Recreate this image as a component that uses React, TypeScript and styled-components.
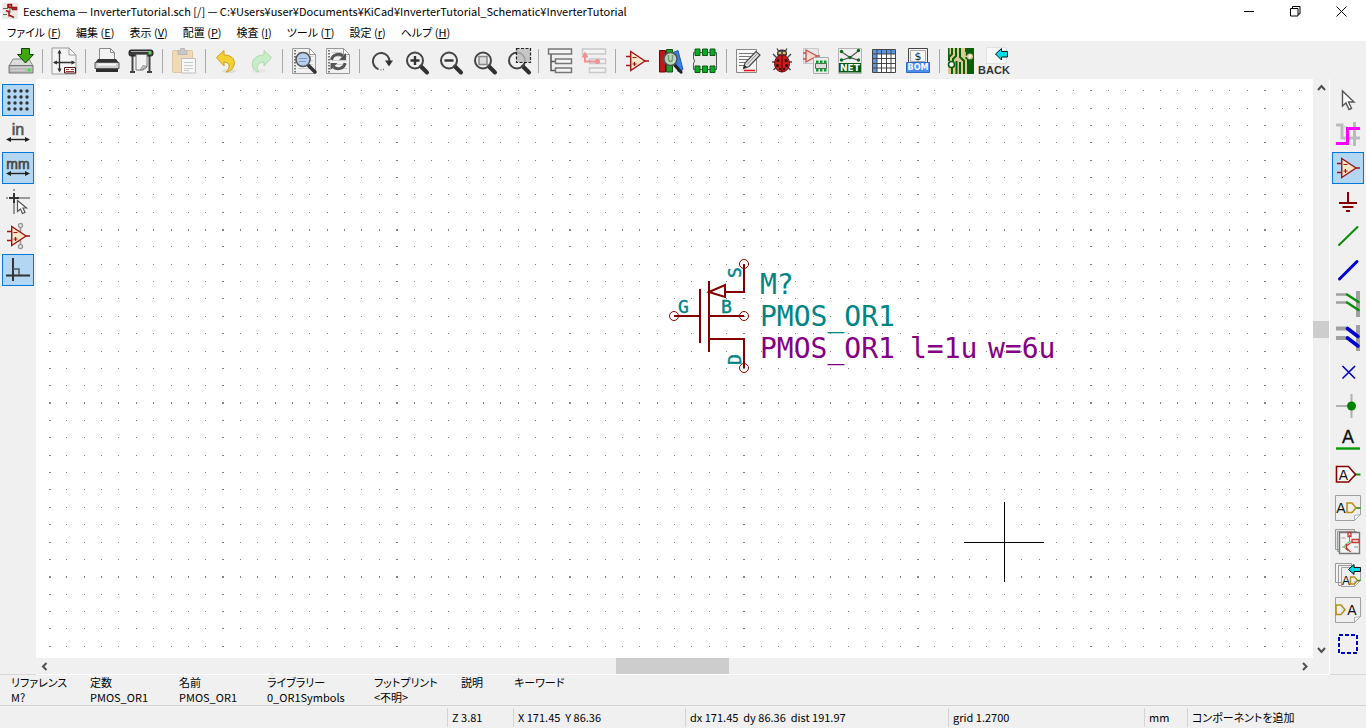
import React from "react";
import styled, { createGlobalStyle } from "styled-components";

const GlobalStyle = createGlobalStyle`
  * { box-sizing: border-box; }
  html, body { margin: 0; padding: 0; height: 100%; }
  body {
    font-family: "Noto Sans CJK JP", "Noto Sans", sans-serif;
    font-feature-settings: "palt";
    font-size: 11px;
    line-height: 16px;
    color: #000;
    background: #f0f0f0;
  }
  #root { height: 100%; }
  button { font: inherit; color: inherit; }
`;

const Window = styled.div`
  display: flex;
  flex-direction: column;
  min-height: 100vh;
  overflow: hidden;
`;

const TitleBar = styled.header`
  display: flex;
  align-items: center;
  height: 22px;
  padding: 0 2px;
  background: #fff;
`;

const AppIcon = styled.svg`
  width: 16px;
  height: 16px;
  flex: none;
`;

const Title = styled.h1`
  flex: 1;
  margin: 0 0 0 5px;
  font-size: 11px;
  font-weight: 400;
  line-height: 22px;
  white-space: nowrap;
`;

const CaptionButton = styled.button`
  display: flex;
  align-items: center;
  justify-content: center;
  width: 46px;
  height: 22px;
  padding: 0;
  border: 0;
  background: transparent;
`;

const MenuBar = styled.nav`
  display: flex;
  height: 19px;
  padding-left: 7px;
  gap: 15px;
  background: #fff;
`;

const MenuButton = styled.button`
  padding: 0;
  border: 0;
  background: transparent;
  line-height: 20px;
  white-space: nowrap;
`;

const ToolBar = styled.div`
  display: flex;
  align-items: center;
  height: 38px;
  padding: 2px 0 0 4px;
  background: #f0f0f0;
`;

const ToolButton = styled.button`
  display: flex;
  align-items: center;
  justify-content: center;
  width: 34px;
  height: 34px;
  padding: 0;
  border: 0;
  background: transparent;
`;

const Separator = styled.span`
  width: 1px;
  height: 24px;
  margin: 0 4px;
  background: #a8a8a8;
`;

const Workspace = styled.div`
  display: flex;
  flex: 1;
  min-height: 0;
`;

const SideBar = styled.div`
  display: flex;
  flex-direction: column;
  flex: none;
  gap: 2px;
  width: 36px;
  padding: 5px 2px 0;
  border-bottom: 1px solid #d8d8d8;
  background: #f0f0f0;
`;

const SideButton = styled.button<{ $active?: boolean }>`
  display: flex;
  align-items: center;
  justify-content: center;
  width: 32px;
  height: 32px;
  padding: 0;
  border: 1px solid ${(p) => (p.$active ? "#0078d7" : "transparent")};
  background: ${(p) => (p.$active ? "#b3d7f3" : "transparent")};
`;

const Icon = styled.svg`
  display: block;
  width: 26px;
  height: 26px;
  overflow: visible;
`;

const Viewport = styled.main`
  display: grid;
  grid-template-columns: minmax(0, 1fr) 16px;
  grid-template-rows: minmax(0, 1fr) 16px;
  flex: 1;
  min-width: 0;
  padding: 0 1px 1px 0;
  background: #fff;
`;

const Sheet = styled.svg`
  display: block;
  width: 100%;
  height: 100%;
  background: #fff;
`;

const ScrollBar = styled.div<{ $vertical?: boolean }>`
  display: flex;
  flex-direction: ${(p) => (p.$vertical ? "column" : "row")};
  background: #f0f0f0;
`;

const ScrollArrow = styled.button`
  display: flex;
  align-items: center;
  justify-content: center;
  flex: 0 0 17px;
  padding: 0;
  border: 0;
  background: transparent;
`;

const ScrollGap = styled.span<{ $grow: number }>`
  flex: ${(p) => p.$grow} 1 0;
`;

const ScrollThumb = styled.span<{ $size: number }>`
  flex: 0 0 ${(p) => p.$size}px;
  background: #cdcdcd;
`;

const ScrollCorner = styled.div`
  background: #f0f0f0;
`;

const MessagePanel = styled.dl`
  display: grid;
  grid-template-columns: 79px 89px 88px 107px 87px 53px 1fr;
  height: 31px;
  margin: 0;
  padding-left: 11px;
  border-bottom: 1px solid #d4d4d4;
  background: #f0f0f0;
`;

const Message = styled.div`
  line-height: 15px;
  white-space: nowrap;
`;

const MessageName = styled.dt`
  margin: 0;
`;

const MessageValue = styled.dd`
  margin: 0;
`;

const StatusBar = styled.footer`
  display: grid;
  grid-template-columns: 1fr 66px 172px 263px 196px 43px 179px;
  height: 22px;
  padding: 2px 0 1px;
  background: #f0f0f0;
`;

const StatusField = styled.span`
  padding-left: 4px;
  border-left: 1px solid #d4d4d4;
  line-height: 19px;
  white-space: pre;

  &:first-child { border-left: 0; }
`;

/* ---------- shared drawing parts ---------- */

const SANS = '"Liberation Sans", Arial, sans-serif';
const BADGE = '"DejaVu Sans", sans-serif';

const Magnifier = ({ children }: { children?: React.ReactNode }) => (
  <>
    <path d="M19 18.5 25 24.5" stroke="#303030" strokeWidth="4" strokeLinecap="round" />
    <circle cx="13" cy="12.5" r="8" fill="none" stroke="#444" strokeWidth="2" />
    {children}
  </>
);

const Page = ({ x = 1, y = 0, w = 24, h = 26 }: { x?: number; y?: number; w?: number; h?: number }) => (
  <>
    <path d={`M${x} ${y}h${w - 7}l7 7v${h - 7}h${-w}z`} fill="#f5f5f5" stroke="#999" />
    <path d={`M${x + w - 7} ${y}v7h7z`} fill="#fff" stroke="#999" />
  </>
);

const Note = ({ x = 0, y = 0, s = 25 }: { x?: number; y?: number; s?: number }) => (
  <>
    <path d={`M${x + 0.5} ${y + 0.5}h${s}v${s - 6}l-6 6h${6 - s}z`} fill="#efefef" stroke="#a0a0a0" />
    <path d={`M${x + s - 5.5} ${y + s + 0.5}v-5l6-1z`} fill="#fff" stroke="#a0a0a0" strokeWidth="0.8" />
  </>
);

const OpAmp = () => (
  <g stroke="#a01414" fill="none">
    <path d="M2 8.5h5M2 17.5h5M21 13h4" strokeWidth="1.4" />
    <path d="M6.7 3.5v19L21 13z" fill="#f7e6c8" strokeWidth="1.4" />
    <path d="M8.5 9.5h4M8.5 16h4M10.5 14v4" strokeWidth="1.2" />
  </g>
);

const Chip = () => (
  <>
    <path d="M1.5 4.5h23v17h-23v-6.500a2.500 2.500 0 0 0 0-4z" fill="#eaeaea" stroke="#555" />
    {[3, 10.5, 18].map((x) => (
      <g key={x} fill="#0aaa28" stroke="#0a5a14">
        <path d={`M${x} 1h5v6.500h-5zM${x} 18h5v6.500h-5z`} />
      </g>
    ))}
  </>
);

const Arrows = ({ y }: { y: number }) => (
  <>
    <path d={`M3 ${y}h20`} stroke="#222" strokeWidth="1.4" />
    <path d={`M1 ${y}l5-2.500v5zM25 ${y}l-5-2.500v5z`} fill="#222" />
  </>
);

/* ---------- top toolbar icons ---------- */

const SaveIcon = () => (
  <Icon viewBox="0 0 26 26">
    <path d="M5 11h16l4 7H1z" fill="#dcdcdc" stroke="#888" />
    <path d="M1 17.500h24v7.500H1z" fill="#b9b9b9" stroke="#777" />
    <path d="M3 19.500h20M3 22.500h14" stroke="#d2d2d2" />
    <path d="M20 20.500h2.500v3H20z" fill="#3de03d" />
    <path d="M13.500.500h8v6h4L17.500 15 9.500 6.500h4z" fill="#3fa70c" stroke="#133e04" />
  </Icon>
);

const PageSettingsIcon = () => (
  <Icon viewBox="0 0 26 26">
    <Page />
    <path d="M8.500 3v20M3 14.500h20" stroke="#333" strokeWidth="1.300" />
    <path d="M8.500 1.500l2 4h-4zM8.500 24.500l2-4h-4zM2 14.500l4-2v4zM24.500 14.500l-4-2v4z" fill="#333" />
    <path d="M13.500 19.500h11v5.500h-11z" fill="#fff" stroke="#4b1212" />
    <path d="M15 21.500h3m2 0h3M15 23.500h8" stroke="#a33" />
  </Icon>
);

const PrintIcon = () => (
  <Icon viewBox="0 0 26 26">
    <path d="M5.500 12V.500h11l4 4V12z" fill="#f3f3f3" stroke="#8a8a8a" />
    <path d="M16.500.500v4h4" fill="none" stroke="#8a8a8a" />
    <path d="M4 11h18l3 4H1z" fill="#333" />
    <path d="M1 14.500h24v6H1z" fill="#cfcfcf" stroke="#555" />
    <path d="M4 16.500h18" stroke="#f6f6f6" strokeWidth="2" />
    <path d="M2 21h22v3H2z" fill="#2d2d2d" />
  </Icon>
);

const PlotIcon = () => (
  <Icon viewBox="0 0 26 26">
    <path d="M4.500 8v16M21.500 8v16M2 24h5M19 24h5" stroke="#444" strokeWidth="2" />
    <rect x="1" y="2" width="24" height="6" rx="2" fill="#3a3a3a" stroke="#222" />
    <path d="M3 3.500h20" stroke="#aaa" />
    <path d="M8 6.500h11V19l-4 3H8z" fill="#f3f3f3" stroke="#777" />
    <path d="M12 22.500l3-5 4 1z" fill="#c8c8c8" stroke="#888" strokeWidth=".8" />
    <path d="M20.500 3.500h3v3h-3z" fill="#4bd24b" />
  </Icon>
);

const PasteIcon = () => (
  <Icon viewBox="0 0 26 26" opacity="0.55">
    <rect x="1.500" y="2.500" width="20" height="22" rx="1" fill="#efc889" stroke="#cda56a" />
    <path d="M7 2.500h2.500V.500h4v2H16v4H7z" fill="#a9a9a9" stroke="#8c8c8c" />
    <path d="M10.500 10.500h14V25h-14z" fill="#fff" stroke="#999" />
    <path d="M13 14.500h9M13 17.500h9M13 20.500h9M13 22.500h5" stroke="#aaa" />
  </Icon>
);

const UndoIcon = () => (
  <Icon viewBox="0 0 26 26">
    <ellipse cx="15" cy="23" rx="7" ry="2" fill="#ddd" />
    <path d="M2.500 9.500 10 2.500V7c9 0 12.500 6 9 12.500-1.500 3-4 4-7 4.500 4-3 5-9.500-2-10v4z" fill="#f5d035" stroke="#cfa018" />
  </Icon>
);

const RedoIcon = () => (
  <Icon viewBox="0 0 26 26" opacity="0.5">
    <ellipse cx="11" cy="23" rx="7" ry="2" fill="#ddd" />
    <path d="M23.500 9.500 16 2.500V7C7 7 2.500 13 5 19.500c1 2.500 3 4 6 4.500-3-3-3-9.500 5-10v4z" fill="#a3eba0" stroke="#6fc46c" />
  </Icon>
);

const Notebook = () => (
  <>
    <path d="M1.500.500h17l6 6v19h-23z" fill="#f2f2f2" stroke="#999" />
    <path d="M18.500.500v6h6z" fill="#fff" stroke="#999" />
    <path d="M4 2v23" stroke="#777" strokeWidth="2" strokeDasharray="1.500 1.500" />
    <path d="M7 4.500h10M7 8.500h15M7 12.500h15M7 16.500h15M7 20.500h15" stroke="#ccc" />
  </>
);

const FindIcon = () => (
  <Icon viewBox="0 0 26 26">
    <Notebook />
    <path d="M17.500 17.500 24 24" stroke="#333" strokeWidth="3.500" strokeLinecap="round" />
    <circle cx="12" cy="11.500" r="7" fill="#b9cfec" stroke="#555" strokeWidth="1.600" />
    <path d="M8 10.500h8M8 13.500h7" stroke="#7e9cc9" />
  </Icon>
);

const ReplaceIcon = () => (
  <Icon viewBox="0 0 26 26">
    <Notebook />
    <path d="M6.500 12c1-6 8-7 11.500-4M20 15c-1 6-8 7-11.500 4" fill="none" stroke="#555" strokeWidth="3" />
    <path d="M21 5v7h-7zM5.500 22v-7h7z" fill="#555" />
  </Icon>
);

const RefreshIcon = () => (
  <Icon viewBox="0 0 26 26">
    <path d="M10 21A8.300 8.300 0 1 1 21.500 13" fill="none" stroke="#444" strokeWidth="2" />
    <path d="M17 12.500h8L21 18.500z" fill="#333" />
    <path d="M10 21c2.500 1 4.500.800 6.500 0" fill="none" stroke="#777" strokeWidth="1.500" strokeDasharray="1 1.500" />
  </Icon>
);

const ZoomInIcon = () => (
  <Icon viewBox="0 0 26 26">
    <Magnifier><path d="M8.500 12.500h9M13 8v9" stroke="#333" strokeWidth="2.400" /></Magnifier>
  </Icon>
);

const ZoomOutIcon = () => (
  <Icon viewBox="0 0 26 26">
    <Magnifier><path d="M8.500 12.500h9" stroke="#333" strokeWidth="2.400" /></Magnifier>
  </Icon>
);

const ZoomFitIcon = () => (
  <Icon viewBox="0 0 26 26">
    <Magnifier><path d="M9 8.500h8v8H9z" fill="#ddd" stroke="#888" strokeWidth="1.500" /></Magnifier>
  </Icon>
);

const ZoomAreaIcon = () => (
  <Icon viewBox="0 0 26 26">
    <Magnifier>
      <path d="M12.500.500h14v14h-14z" fill="#bbb" fillOpacity=".8" stroke="#222" strokeWidth="1.200" strokeDasharray="3 1.500" />
    </Magnifier>
  </Icon>
);

const HierarchyIcon = () => (
  <Icon viewBox="0 0 26 26">
    <path d="M4 6v16.500h5M4 13.500h5" fill="none" stroke="#555" strokeWidth="1.500" />
    <g fill="#f4f4f4" stroke="#777" strokeWidth="1.500">
      <path d="M1.500 1h23v5h-23zM8.500 11h16v4.500h-16zM8.500 20h16v4.500h-16z" />
    </g>
  </Icon>
);

const LeaveSheetIcon = () => (
  <Icon viewBox="0 0 26 26">
    <g fill="#f4f4f4" stroke="#c8c8c8" strokeWidth="1.500">
      <path d="M1.500 1h23v5h-23zM8.500 11h16v4.500h-16zM8.500 20h16v4.500h-16z" />
    </g>
    <path d="M4 7v6.500h12" fill="none" stroke="#f09090" strokeWidth="2" />
    <path d="M.500 9.500 4 3.500l3.500 6z" fill="#f09090" />
    <circle cx="16.500" cy="13.500" r="2.500" fill="#f09090" />
  </Icon>
);

const SymbolEditorIcon = () => (
  <Icon viewBox="0 0 26 26"><OpAmp /></Icon>
);

const LibraryIcon = () => (
  <Icon viewBox="0 0 26 26">
    <path d="M1.500 2.500h6V24h-6z" fill="#c01818" stroke="#700" />
    <path d="M8.500 1.500h6V24h-6z" fill="#1ea02c" stroke="#0a5a14" />
    <path d="M15 4.500l5-2 5 19-5 2z" fill="#3a80e8" stroke="#1c5ab8" />
    <path d="M17 17.500 23 24" stroke="#222" strokeWidth="3.200" strokeLinecap="round" />
    <circle cx="12.500" cy="11" r="6.500" fill="#c4e4cc" fillOpacity=".9" stroke="#555" strokeWidth="1.600" />
    <path d="M10.500 7v5q2 3 4 0V7" fill="none" stroke="#7a9a80" strokeWidth="1.600" />
  </Icon>
);

const FootprintIcon = () => <Icon viewBox="0 0 26 26"><Chip /></Icon>;

const AnnotateIcon = () => (
  <Icon viewBox="0 0 26 26">
    <path d="M1.500 1.500h20v23h-20z" fill="#f8f8f8" stroke="#888" />
    <path d="M4 5.500h15M4 8.500h14M4 11.500h11M4 14.500h8M4 17.500h5" stroke="#777" />
    <path d="M9 22.500h11" stroke="#f00000" strokeWidth="1.500" />
    <path d="M8.500 20.500 10 15 21 3.500l4 3.500L14 18.500z" fill="#e4e4e4" stroke="#444" strokeWidth="1.200" />
    <path d="M8.500 20.500l1-3.500 2.500 2z" fill="#222" />
    <path d="M12 16.500 22.500 5.500" stroke="#888" />
  </Icon>
);

const BugIcon = () => (
  <Icon viewBox="0 0 26 26">
    <path d="M4 6l4 4M22 6l-4 4M3 14h4M23 14h-4M4.500 22l3-3M21.500 22l-3-3M9.500 3 8 .500M16.500 3 18 .500" stroke="#444" strokeWidth="1.400" />
    <ellipse cx="13" cy="5.500" rx="4.500" ry="3.500" fill="#555" stroke="#222" />
    <path d="M9.500 5h2.500M14 5h2.500" stroke="#e8c060" strokeWidth="2" />
    <ellipse cx="13" cy="15.500" rx="7.500" ry="8.500" fill="#cc1b1b" stroke="#6c0a0a" />
    <path d="M13 8v16" stroke="#500" />
    <g fill="#2a0808">
      <circle cx="9" cy="12.500" r="1.500" /><circle cx="17" cy="12.500" r="1.500" />
      <circle cx="8.500" cy="17.500" r="1.500" /><circle cx="17.500" cy="17.500" r="1.500" />
      <circle cx="11" cy="21" r="1.200" /><circle cx="15" cy="21" r="1.200" />
    </g>
  </Icon>
);

const AssignIcon = () => (
  <Icon viewBox="0 0 26 26">
    <path d="M.500.500h15v15H.500z" fill="#e8e8e8" stroke="#c8c8c8" />
    <path d="M3 2v12l11-6zM0 5h3M0 11h3M14 8h3" fill="#f6dcd0" stroke="#c05050" strokeWidth="1.300" />
    <path d="M10.500 9.500h15v16h-15z" fill="#eee" stroke="#aaa" />
    <path d="M12.500 15.500h11v5h-11z" fill="#ddd" stroke="#666" />
    <path d="M13 12.500h2.500v3H13zM17 12.500h2.500v3H17zM21 12.500h2.500v3H21zM13 20.500h2.500v3H13zM17 20.500h2.500v3H17zM21 20.500h2.500v3H21z" fill="#0d9a2a" />
  </Icon>
);

const NetlistIcon = () => (
  <Icon viewBox="0 0 26 26">
    <path d="M1.500.500h23v25h-23z" fill="#efefef" stroke="#b4b4b4" />
    <path d="M4 3.500l9 6 9-7M4 12.500l9-3 9 3" fill="none" stroke="#555" strokeWidth="1.200" />
    <g fill="#0a6a1a">
      <circle cx="4.500" cy="3.500" r="1.700" /><circle cx="21.500" cy="2.500" r="1.700" /><circle cx="13" cy="9.500" r="1.700" />
      <circle cx="4.500" cy="12" r="1.700" /><circle cx="21.500" cy="12" r="1.700" />
    </g>
    <path d="M2 15h22v9.500H2z" fill="#045a12" />
    <text x="13" y="23" fontSize="9" fontWeight="700" fontFamily={BADGE} fill="#fff" textAnchor="middle">NET</text>
  </Icon>
);

const TableIcon = () => (
  <Icon viewBox="0 0 26 26">
    <path d="M1.500 1.500h23v23h-23z" fill="#fff" />
    <path d="M1.500 1.500h23v4.500h-23zM1.500 1.500h4.500v23H1.500z" fill="#5b96e8" />
    <path d="M1.500 1.500h23v23h-23zM6 1.500v23M10.500 1.500v23M15.500 1.500v23M20 1.500v23M1.500 6h23M1.500 10.500h23M1.500 15.500h23M1.500 20h23" fill="none" stroke="#444" />
  </Icon>
);

const BomIcon = () => (
  <Icon viewBox="0 0 26 26">
    <path d="M3.500.500h19v14h-19z" fill="#f6f6f6" stroke="#444" />
    <path d="M5.500 2.500h15v11h-15z" fill="none" stroke="#aaa" />
    <text x="13" y="12" fontSize="11" fontFamily={BADGE} fill="#222" textAnchor="middle">$</text>
    <path d="M1.500 14.500h23v10h-23z" fill="#4b8df0" stroke="#2f69c8" />
    <text x="13" y="22" fontSize="8" fontWeight="700" fontFamily={BADGE} fill="#fff" textAnchor="middle">BOM</text>
  </Icon>
);

const PcbIcon = () => (
  <Icon viewBox="0 0 26 26">
    <path d="M0 0h26v26H0z" fill="#dfc896" />
    <path d="M17 0h9v26h-7V12l-2-2zM0 0h1.500v8L0 10z" fill="#086008" />
    <path d="M4 0v6l-3 3v4M8 0v8l-3 3v2M12 0v9l4 4v13M8.500 13v13M12 14v12M4 20v6" fill="none" stroke="#086008" strokeWidth="2" />
    <circle cx="3.500" cy="16.500" r="3" fill="#fff" stroke="#086008" strokeWidth="1.600" />
    <circle cx="22" cy="8.500" r="2.200" fill="#fff" stroke="#dfc896" strokeWidth="1.600" />
    <path d="M20 8.500h-3V4" fill="none" stroke="#dfc896" strokeWidth="1.600" />
  </Icon>
);

const BackIcon = () => (
  <Icon viewBox="0 0 26 26">
    <path d="M4.500-.500h20v16h-20z" fill="#f8f8f8" stroke="#e2e2e2" />
    <path d="M13.500 6 19.500.500v3h6v5.500h-6v3z" fill="#00dce8" stroke="#111" />
    <text x="12" y="26" fontSize="11" fontWeight="700" fontFamily='"Liberation Sans Narrow", "Liberation Sans", sans-serif' fill="#333" textAnchor="middle">BACK</text>
  </Icon>
);

/* ---------- left toolbar icons ---------- */

const GridIcon = () => (
  <Icon viewBox="0 0 26 26">
    {[4, 10, 16, 22].map((y) => [4, 10, 16, 22].map((x) => <circle key={`${x}-${y}`} cx={x} cy={y} r="1.700" fill="#333" />))}
  </Icon>
);

const InchIcon = () => (
  <Icon viewBox="0 0 26 26">
    <text x="13" y="14" fontSize="16" fontFamily={SANS} fill="#555" stroke="#555" strokeWidth=".6" textAnchor="middle">in</text>
    <Arrows y={18.5} />
  </Icon>
);

const MillimetreIcon = () => (
  <Icon viewBox="0 0 26 26">
    <text x="13" y="14" fontSize="14" fontFamily={SANS} fill="#444" stroke="#444" strokeWidth=".6" textAnchor="middle">mm</text>
    <Arrows y={18.5} />
  </Icon>
);

const CursorShapeIcon = () => (
  <Icon viewBox="0 0 26 26">
    <path d="M9 0v2M9 14v11M1 9h2M14 9h11" stroke="#999" strokeWidth="2" />
    <path d="M9 4v10M4 9h10" stroke="#333" strokeWidth="2" />
    <path d="M12.500 11.500v11l3-2.500 2 4.500 2.500-1-2-4.500h3.500z" fill="#fff" stroke="#555" strokeWidth="1.200" />
  </Icon>
);

const HiddenPinIcon = () => (
  <Icon viewBox="0 0 26 26">
    <path d="M15.500 4v18" stroke="#999" strokeWidth="1.600" />
    <g fill="#f0f0f0" stroke="#999" strokeWidth="1.400"><circle cx="15.500" cy="2.500" r="2" /><circle cx="15.500" cy="23.500" r="2" /></g>
    <OpAmp />
  </Icon>
);

const OrthoIcon = () => (
  <Icon viewBox="0 0 26 26">
    <path d="M8 1v23M1 18.500h24" stroke="#333" strokeWidth="2" />
    <path d="M8 12h6v6" fill="none" stroke="#555" strokeWidth="1.500" />
  </Icon>
);

/* ---------- right toolbar icons ---------- */

const SelectIcon = () => (
  <Icon viewBox="0 0 26 26">
    <path d="M7.500 4v15l3.500-3 3 6.500 2.500-1.200-3-6.300H19z" fill="#fff" stroke="#555" strokeWidth="1.400" />
  </Icon>
);

const HighlightIcon = () => (
  <Icon viewBox="0 0 26 26">
    <path d="M1 4h6v13h18M19.500 1v24" fill="none" stroke="#bbb" strokeWidth="3" />
    <path d="M1 22.500h11.500V7.500H25" fill="none" stroke="#f0f" strokeWidth="3" />
  </Icon>
);

const PlaceSymbolIcon = () => <Icon viewBox="0 0 26 26"><OpAmp /></Icon>;

const PowerIcon = () => (
  <Icon viewBox="0 0 26 26">
    <path d="M13 3v11M4 14h18M7.500 18h11M11 22h4" stroke="#840000" strokeWidth="2" />
  </Icon>
);

const WireIcon = () => (
  <Icon viewBox="0 0 26 26"><path d="M4 22 22.500 4" stroke="#0a8c0a" strokeWidth="2" strokeLinecap="round" /></Icon>
);

const BusIcon = () => (
  <Icon viewBox="0 0 26 26"><path d="M4.500 22 22 4.500" stroke="#0000d0" strokeWidth="3" strokeLinecap="round" /></Icon>
);

const WireEntryIcon = () => (
  <Icon viewBox="0 0 26 26">
    <path d="M23 0v26" stroke="#a0a0a0" strokeWidth="4" />
    <path d="M1 3.500h11M1 11.500h11" stroke="#a0a0a0" strokeWidth="2.500" />
    <path d="M12 3.500 23.500 11M12 11.500 23.500 19" stroke="#0a8c0a" strokeWidth="2.400" strokeLinecap="round" />
  </Icon>
);

const BusEntryIcon = () => (
  <Icon viewBox="0 0 26 26">
    <path d="M23 0v26" stroke="#a0a0a0" strokeWidth="4" />
    <path d="M1 3.500h11M1 13h11" stroke="#a0a0a0" strokeWidth="4" />
    <path d="M12.500 3.500 23 11.500M12.500 13 23 21" stroke="#0000d0" strokeWidth="3.600" strokeLinecap="round" />
  </Icon>
);

const NoConnectIcon = () => (
  <Icon viewBox="0 0 26 26"><path d="M7.500 7 20 19.500M20 7 7.500 19.500" stroke="#0000c8" strokeWidth="1.600" /></Icon>
);

const JunctionIcon = () => (
  <Icon viewBox="0 0 26 26">
    <path d="M16.500 1v24M1 13h15" stroke="#b0b0b0" strokeWidth="2" />
    <circle cx="16.500" cy="13" r="4.500" fill="#008400" />
  </Icon>
);

const NetLabelIcon = () => (
  <Icon viewBox="0 0 26 26">
    <text x="13" y="16" fontSize="18" fontFamily={SANS} fill="#111" stroke="#111" strokeWidth=".3" textAnchor="middle">A</text>
    <path d="M1 21.500h24" stroke="#0a9a0a" strokeWidth="2.400" />
  </Icon>
);

const GlobalLabelIcon = () => (
  <Icon viewBox="0 0 26 26">
    <path d="M20 13.500h5.500" stroke="#0a9a0a" strokeWidth="2" />
    <path d="M1.500 5.500h12l7 8-7 7.500h-12z" fill="#fff" stroke="#840000" strokeWidth="1.600" />
    <text x="8.500" y="18.500" fontSize="14" fontFamily={SANS} fill="#111" textAnchor="middle">A</text>
  </Icon>
);

const HierLabelIcon = () => (
  <Icon viewBox="0 0 26 26">
    <Note />
    <path d="M21 13h4.500" stroke="#0a9a0a" strokeWidth="1.600" />
    <text x="6" y="17.500" fontSize="14" fontFamily={SANS} fill="#111" textAnchor="middle">A</text>
    <path d="M12 8h5l4 4.800-4 4.700h-5z" fill="none" stroke="#b8901c" strokeWidth="1.600" />
  </Icon>
);

const SheetIcon = () => (
  <Icon viewBox="0 0 26 26">
    <path d="M.500.500h19v20h-19zM2.500 2.500h19v20h-19z" fill="#e4e4e4" stroke="#999" />
    <path d="M4.500 3.500h20v21h-20z" fill="#f4f4f4" stroke="#777" strokeWidth="1.400" />
    <path d="M14.500 6v7h4M13 22l-3-3v-3l4-3M7 18h3" fill="none" stroke="#5aa85a" />
    <path d="M13 3.500h3v4h-3zM17 10.500h7v3h-7zM11.500 15v6M11.500 17l4-3M11.500 19l4 4" fill="none" stroke="#cc3a3a" strokeWidth="1.300" />
    <path d="M6.500 9h4M19 18h4" stroke="#999" />
  </Icon>
);

const ImportLabelIcon = () => (
  <Icon viewBox="0 0 26 26">
    <path d="M.500.500h16v19H.500zM3.500 2.500h16v20h-16z" fill="#f4f4f4" stroke="#999" />
    <Note x={6} y={4} s={19} />
    <path d="M13.500 6.500 19 1.500v3h6.500v4H19v3z" fill="#00dce8" stroke="#111" />
    <text x="11" y="21.500" fontSize="12" fontFamily={SANS} fill="#111" textAnchor="middle">A</text>
    <path d="M15.500 14h4l3 3.500-3 3.500h-4z" fill="none" stroke="#b8901c" strokeWidth="1.400" />
    <path d="M22.500 17.500h3" stroke="#0a9a0a" strokeWidth="1.400" />
  </Icon>
);

const SheetPinIcon = () => (
  <Icon viewBox="0 0 26 26">
    <Note />
    <path d="M1 8h5l4 4.800-4 4.700H1z" fill="none" stroke="#b8901c" strokeWidth="1.600" />
    <text x="17" y="17.500" fontSize="14" fontFamily={SANS} fill="#111" textAnchor="middle">A</text>
  </Icon>
);

const LineIcon = () => (
  <Icon viewBox="0 0 26 26">
    <path d="M4 4h18v18H4z" fill="none" stroke="#0000d0" strokeWidth="2" strokeDasharray="4 2" />
  </Icon>
);

/* ---------- data ---------- */

type Tool = { name: string; icon: React.FC; active?: boolean };

const toolGroups: Tool[][] = [
  [{ name: "保存", icon: SaveIcon }],
  [{ name: "ページ設定", icon: PageSettingsIcon }],
  [{ name: "印刷", icon: PrintIcon }, { name: "プロット", icon: PlotIcon }],
  [{ name: "貼り付け", icon: PasteIcon }],
  [{ name: "元に戻す", icon: UndoIcon }, { name: "やり直し", icon: RedoIcon }],
  [{ name: "検索", icon: FindIcon }, { name: "置換", icon: ReplaceIcon }],
  [
    { name: "再描画", icon: RefreshIcon },
    { name: "ズームイン", icon: ZoomInIcon },
    { name: "ズームアウト", icon: ZoomOutIcon },
    { name: "全体表示", icon: ZoomFitIcon },
    { name: "選択範囲を拡大", icon: ZoomAreaIcon },
  ],
  [{ name: "階層ナビゲーター", icon: HierarchyIcon }, { name: "シートを出る", icon: LeaveSheetIcon }],
  [
    { name: "シンボルエディター", icon: SymbolEditorIcon },
    { name: "ライブラリーブラウザー", icon: LibraryIcon },
    { name: "フットプリントエディター", icon: FootprintIcon },
  ],
  [
    { name: "アノテーション", icon: AnnotateIcon },
    { name: "ERC", icon: BugIcon },
    { name: "フットプリント割り当て", icon: AssignIcon },
    { name: "ネットリスト", icon: NetlistIcon },
    { name: "フィールド編集", icon: TableIcon },
    { name: "部品表", icon: BomIcon },
  ],
  [{ name: "基板エディター", icon: PcbIcon }, { name: "バックアノテーション", icon: BackIcon }],
];

const leftTools: Tool[] = [
  { name: "グリッド", icon: GridIcon, active: true },
  { name: "インチ", icon: InchIcon },
  { name: "ミリメートル", icon: MillimetreIcon, active: true },
  { name: "カーソル形状", icon: CursorShapeIcon },
  { name: "非表示ピン", icon: HiddenPinIcon },
  { name: "直交配線", icon: OrthoIcon, active: true },
];

const rightTools: Tool[] = [
  { name: "選択", icon: SelectIcon },
  { name: "ネットをハイライト", icon: HighlightIcon },
  { name: "シンボルを配置", icon: PlaceSymbolIcon, active: true },
  { name: "電源ポート", icon: PowerIcon },
  { name: "ワイヤー", icon: WireIcon },
  { name: "バス", icon: BusIcon },
  { name: "ワイヤーエントリー", icon: WireEntryIcon },
  { name: "バスエントリー", icon: BusEntryIcon },
  { name: "空き端子", icon: NoConnectIcon },
  { name: "ジャンクション", icon: JunctionIcon },
  { name: "ネットラベル", icon: NetLabelIcon },
  { name: "グローバルラベル", icon: GlobalLabelIcon },
  { name: "階層ラベル", icon: HierLabelIcon },
  { name: "階層シート", icon: SheetIcon },
  { name: "ラベルをインポート", icon: ImportLabelIcon },
  { name: "シートピン", icon: SheetPinIcon },
  { name: "図形ライン", icon: LineIcon },
];

const menus: [string, string][] = [
  ["ファイル", "F"], ["編集", "E"], ["表示", "V"], ["配置", "P"],
  ["検査", "I"], ["ツール", "T"], ["設定", "r"], ["ヘルプ", "H"],
];

const messages: [string, string][] = [
  ["リファレンス", "M?"],
  ["定数", "PMOS_OR1"],
  ["名前", "PMOS_OR1"],
  ["ライブラリー", "0_OR1Symbols"],
  ["フットプリント", "<不明>"],
  ["説明", ""],
  ["キーワード", ""],
];

const status = ["", "Z 3.81", "X 171.45  Y 86.36", "dx 171.45  dy 86.36  dist 191.97", "grid 1.2700", "mm", "コンポーネントを追加"];

/* ---------- schematic ---------- */

/* Fifty grid steps make a whole number of pixels; every tenth line is heavier. */
const STEP = 17.36;
const TILE = STEP * 50;

const gridLines = (start: number, firstMajor: number) =>
  Array.from({ length: 50 }, (_, i) => {
    const heavy = i % 10 === firstMajor;
    const at = start + i * STEP;
    return { at: Math.floor(heavy ? at - 0.5 : at), size: heavy ? 2 : 1 };
  });

const gridPath = gridLines(11.67, 8)
  .flatMap((row) =>
    gridLines(13.5, 0).map((col) => `M${col.at} ${row.at}h${col.size}v${row.size}h${-col.size}z`)
  )
  .join("");

const GridTile = () => (
  <pattern id="grid" width={TILE} height={TILE} patternUnits="userSpaceOnUse">
    <path d={gridPath} fill="#848484" shapeRendering="crispEdges" />
  </pattern>
);

const PinText = styled.text`
  font-family: "DejaVu Sans Mono", monospace;
  font-size: 18px;
  fill: #008484;
  stroke: #008484;
  stroke-width: 0.4px;
`;

const FieldText = styled.text<{ $color: string }>`
  font-family: "DejaVu Sans Mono", monospace;
  font-size: 28px;
  fill: ${(p) => p.$color};
`;

const pins = [[0, 0], [70, -52], [70, 0], [70, 52]];

const Transistor = () => (
  <g transform="translate(638 237)">
    <g fill="none" stroke="#840000" strokeWidth="2">
      <path d="M0 0h26M26-27v54M35-35v71M35 0h35M35 23h35v29M51-24h19v-28" />
      <path d="M35-24 51-31v12z" />
    </g>
    {pins.map(([x, y]) => (
      <circle key={`${x},${y}`} cx={x} cy={y} r="4.500" fill="none" stroke="#840000" />
    ))}
    <PinText x="4" y="-3">G</PinText>
    <PinText x="47" y="-3">B</PinText>
    <PinText transform="translate(67 -38) rotate(-90)">S</PinText>
    <PinText transform="translate(67 49) rotate(-90)">D</PinText>
    <FieldText x="86" y="-22" $color="#008484">M?</FieldText>
    <FieldText x="86" y="10" $color="#008484">PMOS_OR1</FieldText>
    <FieldText y="42" $color="#840084">
      <tspan x="86">PMOS_OR1 </tspan>
      <tspan x="236">l=1u </tspan>
      <tspan x="314">w=6u</tspan>
    </FieldText>
  </g>
);

const chevrons = { up: "M1 7l3.500-4L8 7", down: "M1 3l3.500 4L8 3", left: "M6.500 1 3 4.500 6.500 8", right: "M3 1l3.500 3.500L3 8" };

const Arrow = ({ dir, label }: { dir: keyof typeof chevrons; label: string }) => (
  <ScrollArrow aria-label={label}>
    <svg width="9" height="9"><path d={chevrons[dir]} fill="none" stroke="#505050" strokeWidth="2" /></svg>
  </ScrollArrow>
);

const renderSide = (tools: Tool[]) =>
  tools.map(({ name, icon: Glyph, active }) => (
    <SideButton key={name} $active={active} aria-label={name} aria-pressed={!!active}>
      <Glyph />
    </SideButton>
  ));

export default function App() {
  return (
    <Window>
      <GlobalStyle />
      <TitleBar>
        <AppIcon viewBox="0 0 16 16">
          <path d="M0 0h16v16H0z" fill="#eceae6" />
          <path d="M1 5.500h5M9 5.500h6M5.500 1v4M8 2v8M1 11.500h4" stroke="#5a6a5a" />
          <path d="M6.500 1.500h3v3h-3zM10.500 4.500h4v2h-4zM7 7.500v6M7 9l-3-1.500M7 12l5 2.500" fill="none" stroke="#a01818" strokeWidth="1.500" />
        </AppIcon>
        <Title>Eeschema — InverterTutorial.sch [/] — C:¥Users¥user¥Documents¥KiCad¥InverterTutorial_Schematic¥InverterTutorial</Title>
        <CaptionButton aria-label="最小化">
          <svg width="11" height="11"><path d="M0 5.500h10" stroke="#000" /></svg>
        </CaptionButton>
        <CaptionButton aria-label="元に戻す">
          <svg width="11" height="11"><path d="M.500 2.500h7.500v7.500H.500zM2.500 2.500v-2h7.500v7.500H8" fill="none" stroke="#000" /></svg>
        </CaptionButton>
        <CaptionButton aria-label="閉じる">
          <svg width="11" height="11"><path d="M.500.500l10 10M10.500.500l-10 10" stroke="#000" /></svg>
        </CaptionButton>
      </TitleBar>
      <MenuBar>
        {menus.map(([label, key]) => (
          <MenuButton key={label}>{label} (<u>{key}</u>)</MenuButton>
        ))}
      </MenuBar>
      <ToolBar role="toolbar">
        {toolGroups.map((group, i) => (
          <React.Fragment key={group[0].name}>
            {i > 0 && <Separator />}
            {group.map(({ name, icon: Glyph }) => (
              <ToolButton key={name} aria-label={name}><Glyph /></ToolButton>
            ))}
          </React.Fragment>
        ))}
      </ToolBar>
      <Workspace>
        <SideBar role="toolbar">{renderSide(leftTools)}</SideBar>
        <Viewport>
          <Sheet>
            <defs><GridTile /></defs>
            <rect width="100%" height="100%" fill="url(#grid)" />
            <Transistor />
            <path d="M928 463.500h80M968.500 423v80" stroke="#000" />
          </Sheet>
          <ScrollBar $vertical>
            <Arrow dir="up" label="上へ" />
            <ScrollGap $grow={225} />
            <ScrollThumb $size={17} />
            <ScrollGap $grow={303} />
            <Arrow dir="down" label="下へ" />
          </ScrollBar>
          <ScrollBar>
            <Arrow dir="left" label="左へ" />
            <ScrollGap $grow={563} />
            <ScrollThumb $size={113} />
            <ScrollGap $grow={567} />
            <Arrow dir="right" label="右へ" />
          </ScrollBar>
          <ScrollCorner />
        </Viewport>
        <SideBar role="toolbar">{renderSide(rightTools)}</SideBar>
      </Workspace>
      <MessagePanel>
        {messages.map(([name, value]) => (
          <Message key={name}>
            <MessageName>{name}</MessageName>
            <MessageValue>{value}</MessageValue>
          </Message>
        ))}
      </MessagePanel>
      <StatusBar>
        {status.map((text, i) => <StatusField key={i}>{text}</StatusField>)}
      </StatusBar>
    </Window>
  );
}
